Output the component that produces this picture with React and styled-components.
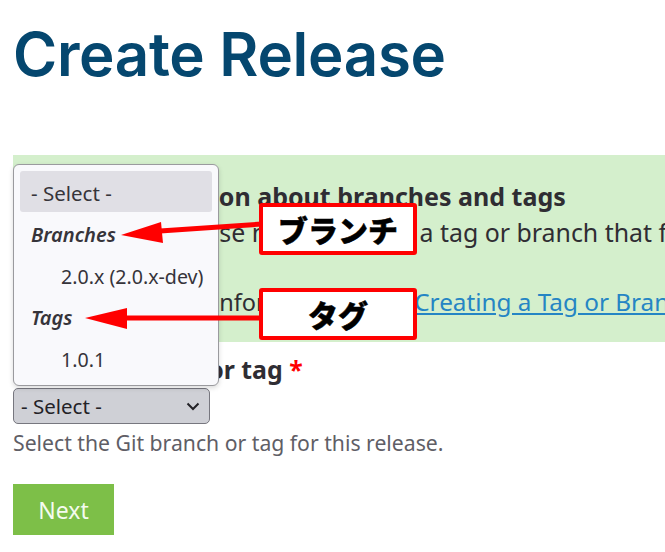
import React from 'react'
import styled, { createGlobalStyle } from 'styled-components'

const GlobalStyle = createGlobalStyle`
  html, body {
    margin: 0;
    padding: 0;
    background: #fff;
    overflow: hidden;
  }
  body {
    font-family: "Noto Sans", "Open Sans", sans-serif;
    color: #2f2d33;
  }
`

const Page = styled.div`
  position: relative;
  width: 665px;
  height: 552px;
  overflow: hidden;
  padding-left: 13px;
  box-sizing: border-box;
`

const Title = styled.h1`
  margin: 0;
  padding-top: 18px;
  height: 155px;
  box-sizing: border-box;
  font-family: Inter, sans-serif;
  font-size: 60px;
  line-height: 72px;
  font-weight: 600;
  letter-spacing: -0.3px;
  color: #05476f;
`

const Notice = styled.div`
  height: 187px;
  padding: 24px 0 0 24px;
  box-sizing: border-box;
  background: #d4efcc;
  font-size: 23.5px;
  line-height: 35px;
  white-space: nowrap;
  overflow: hidden;
`

const NoticeTitle = styled.div`
  font-size: 25px;
  font-weight: 700;
`

const NoticeText = styled.p`
  margin: 1px 0 34px;
  font-size: 24.9px;
`

const Link = styled.a`
  margin-left: -6px;
  color: #2585c4;
  font-size: 24.3px;
  text-decoration: underline;
`

const FieldLabel = styled.label`
  display: block;
  margin-top: 9px;
  font-size: 24.9px;
  line-height: 36px;
  font-weight: 700;
`

const Required = styled.span`
  color: #f00;
`

const FakeSelect = styled.div`
  display: flex;
  align-items: center;
  justify-content: space-between;
  width: 197px;
  height: 36px;
  margin-top: 1px;
  padding: 0 9px 0 7px;
  box-sizing: border-box;
  background: #cfd0d6;
  border: 1px solid #77777f;
  border-radius: 5px;
  font-size: 20.5px;
  color: #232227;
`

const Hint = styled.div`
  margin-top: 3px;
  font-size: 21.2px;
  line-height: 32px;
  color: #5f5e66;
`

const NextButton = styled.button`
  display: block;
  width: 101px;
  height: 51px;
  margin-top: 25px;
  border: 0;
  padding: 0;
  background: #7dbf48;
  color: #f4fbef;
  font-family: inherit;
  font-size: 23px;
`

const Dropdown = styled.div`
  position: absolute;
  left: 13px;
  top: 164px;
  width: 206px;
  height: 222px;
  padding: 6px;
  box-sizing: border-box;
  background: #f9f9fc;
  border: 1px solid #9a9a9e;
  border-radius: 6px;
  box-shadow: 0 2px 5px rgba(0, 0, 0, 0.15);
  font-size: 20px;
  color: #36343a;
`

const DropdownRow = styled.div`
  height: 41.4px;
  line-height: ${(p) => (p.$selected ? '44px' : '45px')};
  padding-left: ${(p) => (p.$indent ? '41px' : '11px')};
  border-radius: 3px;
  background: ${(p) => (p.$selected ? '#e0dfe5' : 'transparent')};
  font-size: ${(p) => (p.$indent ? '19.6px' : p.$selected ? '20.5px' : 'inherit')};
  font-style: ${(p) => (p.$group ? 'italic' : 'normal')};
  font-weight: ${(p) => (p.$group ? 600 : 400)};
  white-space: nowrap;
`

const Arrows = styled.svg`
  position: absolute;
  left: 0;
  top: 0;
`

const Callout = styled.div`
  position: absolute;
  left: 259px;
  top: ${(p) => p.$top}px;
  width: 158px;
  height: 52px;
  box-sizing: border-box;
  display: flex;
  align-items: center;
  justify-content: center;
  background: #fff;
  border: 4px solid #f00;
  border-radius: 3px;
  font-family: "Noto Sans CJK JP", sans-serif;
  font-size: 30px;
  font-weight: 900;
  -webkit-text-stroke: 0.5px #000;
  color: #000;
`

const App = () => {
  return (
    <Page>
      <GlobalStyle />
      <Title>Create Release</Title>
      <Notice>
        <NoticeTitle>Your information about branches and tags</NoticeTitle>
        <NoticeText>When you release make sure it's a tag or branch that fits this release.</NoticeText>
        <div>Look additional information, go to <Link href="#">Creating a Tag or Branch</Link></div>
      </Notice>
      <FieldLabel>Release branch or tag <Required>*</Required></FieldLabel>
      <FakeSelect>
        - Select -
        <svg width="14" height="9" viewBox="0 0 14 9" fill="none">
          <path d="M1.5 1.5L7 7l5.5-5.5" stroke="#232227" strokeWidth="2" />
        </svg>
      </FakeSelect>
      <Hint>Select the Git branch or tag for this release.</Hint>
      <NextButton>Next</NextButton>

      <Dropdown>
        <DropdownRow $selected>- Select -</DropdownRow>
        <DropdownRow $group>Branches</DropdownRow>
        <DropdownRow $indent>2.0.x (2.0.x-dev)</DropdownRow>
        <DropdownRow $group>Tags</DropdownRow>
        <DropdownRow $indent>1.0.1</DropdownRow>
      </Dropdown>

      <Arrows width="665" height="552" viewBox="0 0 665 552">
        <path d="M160 231L262 224" stroke="#f00" strokeWidth="5" />
        <path d="M121 235L161 222L163 243Z" fill="#f00" />
        <path d="M125 318H262" stroke="#f00" strokeWidth="5" />
        <path d="M85 318L127 308V329Z" fill="#f00" />
      </Arrows>
      <Callout $top={203}>ブランチ</Callout>
      <Callout $top={288}>タグ</Callout>
    </Page>
  )
}

export default App
